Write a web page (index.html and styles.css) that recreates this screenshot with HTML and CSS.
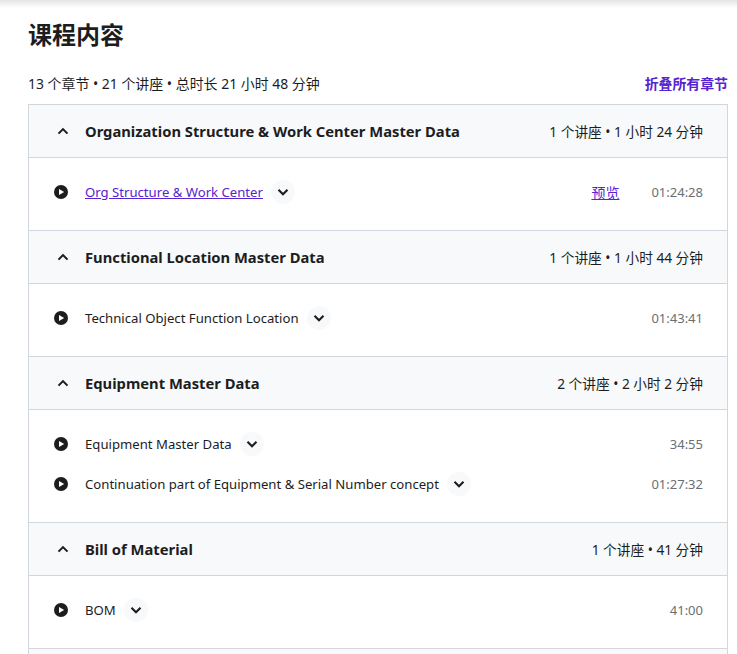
FILE: index.html
```html
<!DOCTYPE html>
<html lang="zh-CN">
	<head>
		<meta charset="utf-8">
		<title>课程内容</title>
		<link rel="stylesheet" href="styles.css">
	</head>

	<body>
		<div class="topshade"></div>
		<div class="curriculum">
			<h2 class="title">课程内容</h2>
			<div class="meta">
				<span>13 个章节 • 21 个讲座 • 总时长 21 小时 48 分钟</span>
				<a class="collapse" href="#">折叠所有章节</a>
			</div>

			<div class="sections">
				<div class="head">
					<svg class="caret" viewBox="0 0 24 24"><path d="M6 15.5l6-6 6 6"/></svg>
					<span class="head-name">Organization Structure &amp; Work Center Master Data</span>
					<span class="head-info">1 个讲座 • 1 小时 24 分钟</span>
				</div>
				<div class="body">
					<div class="row">
						<svg class="play" viewBox="0 0 14 14"><circle cx="7" cy="7" r="7"/><path class="tri" d="M5 3.9v6.2L10.2 7z"/></svg>
						<a class="lecture link" href="#">Org Structure &amp; Work Center</a>
						<span class="toggle"><svg class="chev" viewBox="0 0 24 24"><path d="M6 9l6 6 6-6"/></svg></span>
						<a class="preview" href="#">预览</a>
						<span class="time">01:24:28</span>
					</div>
				</div>

				<div class="head">
					<svg class="caret" viewBox="0 0 24 24"><path d="M6 15.5l6-6 6 6"/></svg>
					<span class="head-name">Functional Location Master Data</span>
					<span class="head-info">1 个讲座 • 1 小时 44 分钟</span>
				</div>
				<div class="body">
					<div class="row">
						<svg class="play" viewBox="0 0 14 14"><circle cx="7" cy="7" r="7"/><path class="tri" d="M5 3.9v6.2L10.2 7z"/></svg>
						<span class="lecture">Technical Object Function Location</span>
						<span class="toggle"><svg class="chev" viewBox="0 0 24 24"><path d="M6 9l6 6 6-6"/></svg></span>
						<span class="time">01:43:41</span>
					</div>
				</div>

				<div class="head">
					<svg class="caret" viewBox="0 0 24 24"><path d="M6 15.5l6-6 6 6"/></svg>
					<span class="head-name">Equipment Master Data</span>
					<span class="head-info">2 个讲座 • 2 小时 2 分钟</span>
				</div>
				<div class="body">
					<div class="row">
						<svg class="play" viewBox="0 0 14 14"><circle cx="7" cy="7" r="7"/><path class="tri" d="M5 3.9v6.2L10.2 7z"/></svg>
						<span class="lecture">Equipment Master Data</span>
						<span class="toggle"><svg class="chev" viewBox="0 0 24 24"><path d="M6 9l6 6 6-6"/></svg></span>
						<span class="time">34:55</span>
					</div>
					<div class="row">
						<svg class="play" viewBox="0 0 14 14"><circle cx="7" cy="7" r="7"/><path class="tri" d="M5 3.9v6.2L10.2 7z"/></svg>
						<span class="lecture">Continuation part of Equipment &amp; Serial Number concept</span>
						<span class="toggle"><svg class="chev" viewBox="0 0 24 24"><path d="M6 9l6 6 6-6"/></svg></span>
						<span class="time">01:27:32</span>
					</div>
				</div>

				<div class="head">
					<svg class="caret" viewBox="0 0 24 24"><path d="M6 15.5l6-6 6 6"/></svg>
					<span class="head-name">Bill of Material</span>
					<span class="head-info">1 个讲座 • 41 分钟</span>
				</div>
				<div class="body">
					<div class="row">
						<svg class="play" viewBox="0 0 14 14"><circle cx="7" cy="7" r="7"/><path class="tri" d="M5 3.9v6.2L10.2 7z"/></svg>
						<span class="lecture">BOM</span>
						<span class="toggle"><svg class="chev" viewBox="0 0 24 24"><path d="M6 9l6 6 6-6"/></svg></span>
						<span class="time">41:00</span>
					</div>
				</div>

				<div class="head head-last"></div>
			</div>
		</div>
	</body>
</html>
```

FILE: styles.css
```css
html,
body {
	margin: 0;
	height: 654px;
	overflow: hidden;
	background-color: #ffffff;
}

body {
	font-family: "Noto Sans", "Noto Sans CJK SC", sans-serif;
	font-size: 14px;
	color: #1c1d1f;
}

.topshade {
	height: 8px;
	margin-bottom: -8px;
	background: linear-gradient(#e4e4e6, #ffffff);
}

.curriculum {
	padding: 0 9px 0 28px;
}

.title {
	margin: 0;
	padding-top: 17px;
	font-size: 24px;
	line-height: 36px;
	font-weight: 700;
}

.meta {
	display: flex;
	justify-content: space-between;
	align-items: center;
	height: 22px;
	margin-top: 19px;
	margin-bottom: 10px;
	font-size: 13.95px;
}

.collapse {
	font-size: 13.9px;
	font-weight: 700;
	color: #5624d0;
	text-decoration: none;
}

.sections {
	border: 1px solid #d1d7dc;
	border-bottom: none;
}

.head {
	display: flex;
	align-items: center;
	height: 52px;
	padding: 0 24px 0 25px;
	background-color: #f7f9fa;
	border-bottom: 1px solid #d1d7dc;
}

.head-last {
	height: 5px;
	border-bottom: none;
}

.caret {
	width: 18px;
	height: 18px;
	margin-right: 13px;
	fill: none;
	stroke: #1c1d1f;
	stroke-width: 2.8;
}

.head-name {
	font-size: 14.76px;
	font-weight: 700;
}

.head-info {
	margin-left: auto;
	font-size: 13.7px;
}

.body {
	padding: 14px 24px 18px 25px;
	border-bottom: 1px solid #d1d7dc;
}

.row {
	display: flex;
	align-items: center;
	height: 40px;
}

.play {
	width: 14px;
	height: 14px;
	margin-top: -1px;
	margin-right: 17px;
	fill: #1c1d1f;
}

.play .tri {
	fill: #ffffff;
}

.lecture {
	font-size: 13.15px;
}

.link {
	color: #5624d0;
}

.toggle {
	display: flex;
	align-items: center;
	justify-content: center;
	width: 24px;
	height: 24px;
	margin-left: 8px;
	border-radius: 50%;
	background-color: #f7f9fa;
}

.chev {
	width: 18px;
	height: 18px;
	fill: none;
	stroke: #1c1d1f;
	stroke-width: 2.8;
}

.preview {
	margin-left: auto;
	font-size: 14px;
	color: #5624d0;
}

.time {
	margin-left: auto;
	font-size: 13px;
	color: #6a6f73;
}

.preview + .time {
	margin-left: 32px;
}
```
